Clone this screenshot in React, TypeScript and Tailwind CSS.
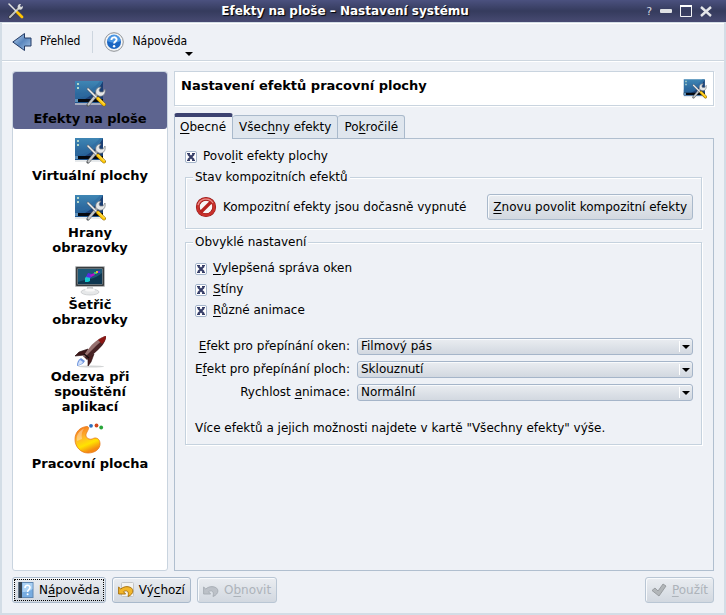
import { useState } from 'react';
import type { ReactNode } from 'react';

function DesktopIcon({ className }: { className: string }) {
  return (
    <svg viewBox="0 0 32 32" className={className} aria-hidden="true">
      <defs>
        <linearGradient id="screen" x1="0" y1="0" x2="0" y2="1">
          <stop offset="0" stopColor="#3f86b4" />
          <stop offset="1" stopColor="#20558f" />
        </linearGradient>
      </defs>
      <rect x="1" y="25" width="28" height="2" fill="#d5dade" opacity="0.6" />
      <rect x="1" y="3" width="28" height="22" fill="url(#screen)" />
      <path d="M29 3v20H7c9-4 17-10 22-20z" fill="#1b3f74" />
      <path d="M1 17c8-1 18-5 25-14h3C22 13 12 19 1 21z" fill="#2f6aa0" opacity="0.6" />
      <rect x="1" y="21" width="28" height="3" fill="#05080f" />
      <rect x="1" y="21" width="3" height="3" fill="#5d8fb8" />
      <path d="M3 5h2v2H3zM3 9h2v2H3z" fill="#b5d6c9" />
      <path d="M14 27l10-12" stroke="#55585c" strokeWidth="3.2" strokeLinecap="round" />
      <path d="M14.500 26.500l9.500-11.500" stroke="#c5c8ca" strokeWidth="2" strokeLinecap="round" />
      <path d="M22 16c-1-4 1-7 5-7l-2 3 1 2 3 0 2-3c1 5-2 8-6 7z" fill="#e5e7e8" stroke="#777b80" strokeWidth="0.7" />
      <path d="M14 11l9 9" stroke="#62666b" strokeWidth="2.6" strokeLinecap="round" />
      <path d="M14 11l9 9" stroke="#eef0f1" strokeWidth="1.5" strokeLinecap="round" />
      <path d="M24 20.500l6 6" stroke="#8a6500" strokeWidth="3.8" strokeLinecap="round" />
      <path d="M24 20.500l6 6" stroke="#ffc90a" strokeWidth="2.800" strokeLinecap="round" />
      <path d="M24.500 20l6 6" stroke="#ffe985" strokeWidth="0.8" />
    </svg>
  );
}

function ToolsIcon() {
  return (
    <svg viewBox="0 0 16 16" className="size-4" aria-hidden="true">
      <path d="M2 14l9-9" stroke="#34363a" strokeWidth="3.2" strokeLinecap="round" />
      <path d="M2 14l9-9" stroke="#bfc2c2" strokeWidth="2" strokeLinecap="round" />
      <path d="M10 6c-1-3 0-5 3-5l-1 2 1 1 2-1c0 3-2 5-5 3z" fill="#d9dbda" />
      <path d="M1 1l8 8" stroke="#e4e5e2" strokeWidth="1.5" strokeLinecap="round" />
      <path d="M9.500 9.500l4.500 4.500" stroke="#ffc400" strokeWidth="2.800" strokeLinecap="round" />
    </svg>
  );
}

function MonitorIcon({ className }: { className: string }) {
  return (
    <svg viewBox="0 0 32 32" className={className} aria-hidden="true">
      <ellipse cx="16" cy="28" rx="9" ry="3" fill="#e6e8e9" stroke="#c6c9cb" strokeWidth="0.8" />
      <path d="M13 22h6v4h-6z" fill="#c9ccce" />
      <ellipse cx="16" cy="26" rx="5" ry="1.500" fill="#f8f8f8" />
      <rect x="1" y="2" width="30" height="21" rx="1.200" fill="#b5b8ba" />
      <rect x="2" y="3" width="28" height="19" rx="0.800" fill="#3a3d3f" />
      <rect x="3.500" y="4.500" width="25" height="16" fill="#8fa3ae" />
      <rect x="4" y="5" width="24" height="15" fill="#0d3650" />
      <path d="M4 5h24v4C20 16 12 15 4 18z" fill="#22617f" opacity="0.8" />
      <path d="M11 18v-4l2-2 3 1v4l-2 1z" fill="#16c9cf" />
      <path d="M12 13l2-4 4 1-1 4z" fill="#5a2be0" />
      <path d="M16 11l4-2 1 2-4 2z" fill="#b312c9" />
      <path d="M20 8h3v2h-3z" fill="#34c76a" />
      <path d="M22 7h2v2h-2z" fill="#e8a93a" />
      <path d="M24 7h2v2h-2z" fill="#5c23e6" />
    </svg>
  );
}

function RocketIcon({ className }: { className: string }) {
  return (
    <svg viewBox="0 0 32 32" className={className} aria-hidden="true">
      <ellipse cx="17" cy="30.500" rx="13" ry="1" fill="#d3d5d6" />
      <path d="M14 13L5 16l-4 4 10-1z" fill="#3d1718" stroke="#24090a" strokeWidth="0.600" />
      <path d="M20 18l-3 8-3 4 0-9z" fill="#4b1e1f" stroke="#24090a" strokeWidth="0.600" />
      <path d="M32 0c0 6-4 10-8 14L13 24l-4-4 8-9C21 6 27 1 32 0z" fill="#482325" />
      <path d="M32 0c-5 1-11 5-16 11L9 20l2 1 11-11c3-3 7-6 10-10z" fill="#96706f" />
      <path d="M32 0c-3 1-5 2-8 4l4 4c3-3 4-5 4-8z" fill="#8d1714" />
      <path d="M10 18l5 4" stroke="#150c0d" strokeWidth="1.500" />
      <path d="M7 22l4 3c-2 3-4 4-8 5 0-4 1-6 4-8z" fill="#6d94dc" />
      <path d="M6 24l3 2c-1 2-3 3-5 3 0-2 1-4 2-5z" fill="#d3e1fa" />
    </svg>
  );
}

function PlasmaIcon({ className }: { className: string }) {
  return (
    <svg viewBox="0 0 32 32" className={className} aria-hidden="true">
      <defs>
        <linearGradient id="plasma" x1="0" y1="0" x2="0.400" y2="1">
          <stop offset="0" stopColor="#f36a1c" />
          <stop offset="0.450" stopColor="#ffb52b" />
          <stop offset="0.750" stopColor="#ffe300" />
          <stop offset="1" stopColor="#f58a13" />
        </linearGradient>
      </defs>
      <path
        d="M13 3.500C6 4 1 9 1 16.500 1 24 7 30 14 30c7 0 12-4 12-9 0-4-2-6-5-6-2 0-3 2-6 1-3-1-4-4-2-7 1-2 3-5 0-5.500z"
        fill="url(#plasma)"
        stroke="#e77817"
        strokeWidth="0.800"
      />
      <path d="M10 5.500C5 8 2 12 3 18l5-2C7 12 8 8 10 5.500z" fill="#fff" opacity="0.350" />
      <circle cx="17" cy="2.800" r="1.900" fill="#2e70c0" />
      <circle cx="22.500" cy="2.500" r="1.900" fill="#d2481c" />
      <circle cx="27.200" cy="4.500" r="1.900" fill="#28a53a" />
    </svg>
  );
}

function BackIcon() {
  return (
    <svg viewBox="0 0 20 20" className="size-5" aria-hidden="true">
      <defs>
        <linearGradient id="back" x1="0" y1="0" x2="1" y2="1">
          <stop offset="0" stopColor="#c4dcf3" />
          <stop offset="0.500" stopColor="#5a86bd" />
          <stop offset="1" stopColor="#a5c4e6" />
        </linearGradient>
      </defs>
      <path d="M0.800 10L12.500 1.500V6h6.500v8h-6.500v4.500z" fill="url(#back)" stroke="#253c66" strokeLinejoin="round" />
    </svg>
  );
}

function HelpIcon() {
  return (
    <svg viewBox="0 0 20 20" className="size-5" aria-hidden="true">
      <circle cx="10" cy="10" r="9.300" fill="#f4f5f6" stroke="#8d9195" />
      <circle cx="10" cy="10" r="7" fill="#1b66c2" />
      <path d="M3.500 9a6.500 6.500 0 0 1 13 0c-4 2-9 2-13 0z" fill="#4b97e4" />
      <path d="M7.400 8c0-3.600 5.400-3.400 5.200-.4-.1 2-2.500 1.900-2.500 4" fill="none" stroke="#fff" strokeWidth="1.900" />
      <circle cx="10.100" cy="14.300" r="1.200" fill="#fff" />
    </svg>
  );
}

function HandbookIcon() {
  return (
    <svg viewBox="0 0 16 16" className="size-4" aria-hidden="true">
      <rect x="1" y="0.500" width="14" height="15" fill="#76abe0" stroke="#5f87b3" />
      <rect x="0.500" y="0" width="3.500" height="16" fill="#34414f" />
      <path d="M4.500 1h10v6c-4 3-7 3-10 3z" fill="#a9d0f3" />
      <path d="M7 6c0-3.500 5-3.500 5-.5 0 2-2.400 2-2.400 4.500" fill="none" stroke="#fff" strokeWidth="1.600" />
      <circle cx="9.600" cy="12.300" r="1" fill="#fff" />
    </svg>
  );
}

function UndoIcon({ muted = false }: { muted?: boolean }) {
  return (
    <svg viewBox="0 0 16 16" className="size-4" aria-hidden="true">
      {!muted && <rect x="3.500" y="0.500" width="12" height="14" rx="1" fill="#f3f3f1" stroke="#c2c5c8" />}
      <path
        d="M0.600 5v7h7L5.500 9.700c3-2 6-.5 4.500 4.800 6.500-2.500 6.500-9 0-9.800C7 4.300 4.500 5.500 2.800 7z"
        fill={muted ? '#bcc1c8' : '#f2b62a'}
        stroke={muted ? '#a5abb3' : '#a46b08'}
        strokeWidth="0.900"
        strokeLinejoin="round"
      />
    </svg>
  );
}

function ForbiddenIcon() {
  return (
    <svg viewBox="0 0 22 22" className="size-[22px]" aria-hidden="true">
      <circle cx="11" cy="11" r="8.200" fill="#f8f6f6" stroke="#8d1414" strokeWidth="3.800" />
      <circle cx="11" cy="11" r="8.200" fill="none" stroke="#c9312c" strokeWidth="2.800" />
      <path d="M5.500 16.500l11-11" stroke="#b8221f" strokeWidth="3.200" />
      <path d="M3 9a8.300 8.300 0 0 1 15-2" fill="none" stroke="#e88f8b" strokeWidth="1.200" />
    </svg>
  );
}

const modules = [
  { lines: ['Efekty na ploše'], Icon: DesktopIcon },
  { lines: ['Virtuální plochy'], Icon: DesktopIcon },
  { lines: ['Hrany', 'obrazovky'], Icon: DesktopIcon },
  { lines: ['Šetřič', 'obrazovky'], Icon: MonitorIcon },
  { lines: ['Odezva při', 'spouštění', 'aplikací'], Icon: RocketIcon },
  { lines: ['Pracovní plocha'], Icon: PlasmaIcon },
];

function Key({ children }: { children: ReactNode }) {
  return <span className="underline decoration-1 underline-offset-2">{children}</span>;
}

function Button({ children, className = '', disabled = false }: { children: ReactNode; className?: string; disabled?: boolean }) {
  return (
    <button
      type="button"
      disabled={disabled}
      className={`flex h-[26px] items-center gap-[5px] whitespace-nowrap rounded-[3px] border border-[#a9b9cb] bg-linear-to-b from-[#eaedf1] to-[#d2d8e0] px-[5px] shadow-[inset_1px_1px_0_#f8fafc] disabled:border-[#b9c6d4] disabled:text-[#adb3ba] ${className}`}
    >
      {children}
    </button>
  );
}

function Check({ children }: { children: ReactNode }) {
  const [checked, setChecked] = useState(true);

  return (
    <label className="flex h-[21px] items-center gap-[6px]">
      <span className="relative flex">
        <input
          type="checkbox"
          checked={checked}
          onChange={() => setChecked(!checked)}
          className="size-3 appearance-none rounded-[2px] border border-[#a3b4ca] bg-white"
        />
        {checked && (
          <svg viewBox="0 0 12 12" className="pointer-events-none absolute inset-0 size-3" aria-hidden="true">
            <path d="M3 3l6 6M9 3l-6 6" stroke="#363e68" strokeWidth="2.200" />
            <path d="M2 2.500h3M7 2.500h3M2 9.500h3M7 9.500h3" stroke="#363e68" />
          </svg>
        )}
      </span>
      <span>{children}</span>
    </label>
  );
}

function SelectRow({ id, label, value }: { id: string; label: ReactNode; value: string }) {
  return (
    <>
      <label htmlFor={id} className="text-right">
        {label}
      </label>
      <div className="relative">
        <select
          id={id}
          className="block h-[17px] w-full appearance-none rounded-[3px] border border-[#a5b5c9] bg-linear-to-b from-[#eaedf1] to-[#d2d8e0] pl-[3px] leading-[15px] shadow-[inset_0_1px_0_#f8fafc]"
        >
          <option>{value}</option>
        </select>
        <span className="pointer-events-none absolute inset-y-[3px] right-[13px] w-px bg-white" />
        <svg viewBox="0 0 8 4" className="pointer-events-none absolute top-[7px] right-[3px] h-1 w-2" aria-hidden="true">
          <path d="M0 0h8L4 4z" />
        </svg>
      </div>
    </>
  );
}

const tabs = [
  { before: '', key: 'O', after: 'becné' },
  { before: 'Všec', key: 'h', after: 'ny efekty' },
  { before: 'Po', key: 'k', after: 'ročilé' },
];

const fieldset =
  'mr-[11px] ml-[10px] border border-[#c5d2de] pr-2 pl-[9px] pt-2 pb-2 shadow-[inset_1px_1px_0_#fff,1px_1px_0_#fff]';

export default function App() {
  const [activeModule, setActiveModule] = useState(0);
  const [activeTab, setActiveTab] = useState(0);

  return (
    <div className="flex min-h-screen flex-col bg-[#eef1f6] font-['DejaVu_Sans',sans-serif] text-[12px] leading-[15px] text-black">
      <header className="flex h-[22px] items-center bg-linear-to-b from-[#4b517f] via-[#353b5d] to-[#474a72] pr-[14px] pl-2 text-white">
        <ToolsIcon />
        <h1 className="flex-1 pl-5 text-center font-bold [text-shadow:1px_1px_1px_#000]">
          Efekty na ploše – Nastavení systému
        </h1>
        <div className="flex items-center gap-2">
          <button type="button" aria-label="Nápověda k oknu" className="text-[11px] text-[#d5d8e0]">
            ?
          </button>
          <button type="button" aria-label="Minimalizovat">
            <svg viewBox="0 0 12 12" className="size-3">
              <rect y="4" width="12" height="4" rx="1" fill="#dfe1e4" />
            </svg>
          </button>
          <button type="button" aria-label="Maximalizovat">
            <svg viewBox="0 0 12 12" className="size-3">
              <path d="M0.500 1h11v10.500H0.500z" fill="none" stroke="#f2f3f5" />
              <path d="M0 1h12" stroke="#fff" strokeWidth="2" />
            </svg>
          </button>
          <button type="button" aria-label="Zavřít">
            <svg viewBox="0 0 12 12" className="size-3">
              <path d="M1 2l10 9M11 2L1 11" stroke="#e4e6e9" strokeWidth="2.400" />
            </svg>
          </button>
        </div>
      </header>

      <div className="flex flex-1 flex-col border-2 border-t border-[#d3dde6]">
        <nav className="flex h-[38px] items-center border-b border-[#cdd6df] px-[10px] font-['DejaVu_Sans_Condensed','DejaVu_Sans',sans-serif] shadow-[inset_0_1px_0_#fff,0_1px_0_#fff]">
          <button type="button" className="flex items-center gap-2">
            <BackIcon />
            Přehled
          </button>
          <span className="mr-[11px] ml-3 h-[22px] w-px bg-[#cdd6df]" />
          <button type="button" className="relative flex items-center gap-2">
            <HelpIcon />
            Nápověda
            <svg viewBox="0 0 8 4" className="absolute -right-1.5 -bottom-1 h-1 w-2" aria-hidden="true">
              <path d="M0 0h8L4 4z" />
            </svg>
          </button>
        </nav>

        <div className="flex flex-1 gap-[6px] px-[10px] pt-[10px]">
          <aside className="w-[156px] shrink-0 rounded-[3px] border border-[#c9d4df] bg-white">
            {modules.map(({ lines, Icon }, i) => (
              <button
                key={lines.join(' ')}
                type="button"
                onClick={() => setActiveModule(i)}
                className={`flex w-full flex-col items-center gap-px rounded-[3px] pt-[6px] pb-[3px] text-[13px] font-bold ${i === activeModule ? 'bg-[#5d648f]' : ''}`}
              >
                <Icon className="size-8" />
                <span>
                  {lines.map((line) => (
                    <span key={line} className="block">
                      {line}
                    </span>
                  ))}
                </span>
              </button>
            ))}
          </aside>

          <main className="flex min-w-0 flex-1 flex-col">
            <div className="flex h-[35px] items-center justify-between border border-[#c9d4df] bg-white px-[6px] shadow-[1px_1px_0_#fff]">
              <h2 className="pb-[6px] text-[13px] font-bold">Nastavení efektů pracovní plochy</h2>
              <DesktopIcon className="size-6" />
            </div>

            <div role="tablist" className="relative mt-[7px] flex items-end">
              {tabs.map((tab, i) => (
                <button
                  key={tab.key}
                  type="button"
                  role="tab"
                  aria-selected={i === activeTab}
                  onClick={() => setActiveTab(i)}
                  className={
                    i === activeTab
                      ? 'h-[26px] rounded-t-[3px] border-x border-t-4 border-x-[#a9b9cb] border-t-[#3c4270] bg-[#eef1f6] pr-[6px] pb-0.5 pl-[5px]'
                      : 'h-6 rounded-t-[3px] border border-l-0 border-[#a9b9cb] bg-[#dfe6ee] px-[6px]'
                  }
                >
                  {tab.before}
                  <Key>{tab.key}</Key>
                  {tab.after}
                </button>
              ))}
            </div>

            <section className="-mt-px flex-1 border border-[#b0bfcf] pt-[7px]">
              <div className="px-[10px] pb-[3px]">
                <Check>
                  Povo<Key>l</Key>it efekty plochy
                </Check>
              </div>

              <fieldset className={fieldset}>
                <legend className="-ml-[2px] bg-[#eef1f6] px-[2px]">Stav kompozitních efektů</legend>
                <div className="flex items-center gap-[6px] pt-px">
                  <ForbiddenIcon />
                  <span className="flex-1">Kompozitní efekty jsou dočasně vypnuté</span>
                  <Button>
                    <span>
                      <Key>Z</Key>novu povolit kompozitní efekty
                    </span>
                  </Button>
                </div>
              </fieldset>

              <fieldset className={`${fieldset} mt-[6px]`}>
                <legend className="-ml-[2px] bg-[#eef1f6] px-[2px]">Obvyklé nastavení</legend>
                <Check>
                  <Key>V</Key>ylepšená správa oken
                </Check>
                <Check>
                  <Key>S</Key>tíny
                </Check>
                <Check>
                  <Key>R</Key>ůzné animace
                </Check>
                <div className="mt-[17px] grid grid-cols-[auto_1fr] items-center gap-x-[7px] gap-y-[6px]">
                  <SelectRow id="switching" label={<><Key>E</Key>fekt pro přepínání oken:</>} value="Filmový pás" />
                  <SelectRow id="desktops" label={<>E<Key>f</Key>ekt pro přepínání ploch:</>} value="Sklouznutí" />
                  <SelectRow id="speed" label={<>Rychlost <Key>a</Key>nimace:</>} value="Normální" />
                </div>
                <p className="mt-5">Více efektů a jejich možnosti najdete v kartě "Všechny efekty" výše.</p>
              </fieldset>
            </section>
          </main>
        </div>

        <footer className="flex gap-[6px] px-[10px] pt-[6px] pb-[10px]">
          <Button className="outline-1 -outline-offset-3 outline-dotted outline-black">
            <HandbookIcon />
            <span>
              N<Key>á</Key>pověda
            </span>
          </Button>
          <Button>
            <UndoIcon />
            <span>
              Vý<Key>c</Key>hozí
            </span>
          </Button>
          <Button disabled>
            <UndoIcon muted />
            <span>
              O<Key>b</Key>novit
            </span>
          </Button>
          <Button disabled className="ml-auto">
            <svg viewBox="0 0 16 16" className="size-4" aria-hidden="true">
              <path d="M1 8.500L4 6l3 3 5-7 3 2-7 10z" fill="#b2b6b9" stroke="#8e9296" strokeWidth="0.800" />
            </svg>
            <span>
              <Key>P</Key>oužít
            </span>
          </Button>
        </footer>
      </div>
    </div>
  );
}
